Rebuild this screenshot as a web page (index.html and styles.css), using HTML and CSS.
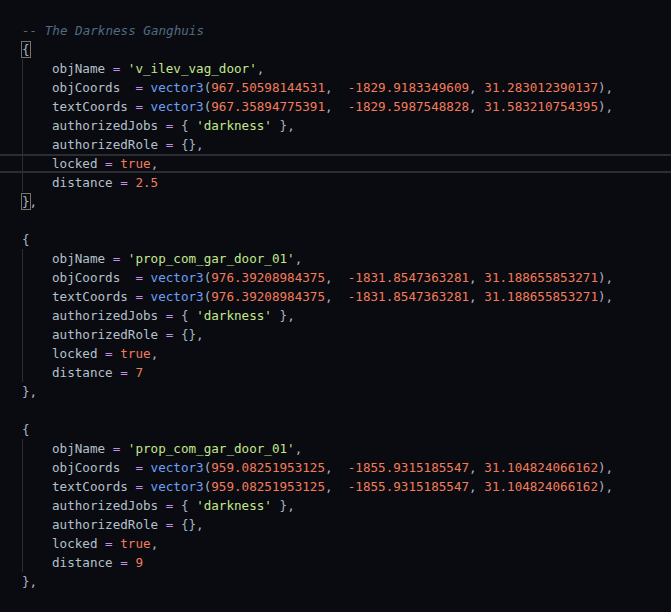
FILE: index.html
```html
<!DOCTYPE html>
<html>
<head>
<meta charset="utf-8">
<link rel="stylesheet" href="styles.css">
</head>
<body>
<div class="editor">
  <div class="line"><span class="c">-- The Darkness Ganghuis</span></div>
  <div class="line"><span class="p match">{</span></div>
  <div class="line"><span class="ind"></span><span class="id">objName</span> <span class="op">=</span> <span class="s">'v_ilev_vag_door'</span><span class="p">,</span></div>
  <div class="line"><span class="ind"></span><span class="id">objCoords</span>  <span class="op">=</span> <span class="fn">vector3</span><span class="p">(</span><span class="n">967.50598144531</span><span class="p">,</span>  <span class="n">-1829.9183349609</span><span class="p">,</span> <span class="n">31.283012390137</span><span class="p">),</span></div>
  <div class="line"><span class="ind"></span><span class="id">textCoords</span> <span class="op">=</span> <span class="fn">vector3</span><span class="p">(</span><span class="n">967.35894775391</span><span class="p">,</span>  <span class="n">-1829.5987548828</span><span class="p">,</span> <span class="n">31.583210754395</span><span class="p">),</span></div>
  <div class="line"><span class="ind"></span><span class="id">authorizedJobs</span> <span class="op">=</span> <span class="p">{</span> <span class="s">'darkness'</span> <span class="p">},</span></div>
  <div class="line"><span class="ind"></span><span class="id">authorizedRole</span> <span class="op">=</span> <span class="p">{},</span></div>
  <div class="line current"><span class="ind"></span><span class="id">locked</span> <span class="op">=</span> <span class="n">true</span><span class="p">,</span></div>
  <div class="line"><span class="ind"></span><span class="id">distance</span> <span class="op">=</span> <span class="n">2.5</span></div>
  <div class="line"><span class="p match">}</span><span class="p">,</span></div>
  <div class="line"></div>
  <div class="line"><span class="p">{</span></div>
  <div class="line"><span class="ind"></span><span class="id">objName</span> <span class="op">=</span> <span class="s">'prop_com_gar_door_01'</span><span class="p">,</span></div>
  <div class="line"><span class="ind"></span><span class="id">objCoords</span>  <span class="op">=</span> <span class="fn">vector3</span><span class="p">(</span><span class="n">976.39208984375</span><span class="p">,</span>  <span class="n">-1831.8547363281</span><span class="p">,</span> <span class="n">31.188655853271</span><span class="p">),</span></div>
  <div class="line"><span class="ind"></span><span class="id">textCoords</span> <span class="op">=</span> <span class="fn">vector3</span><span class="p">(</span><span class="n">976.39208984375</span><span class="p">,</span>  <span class="n">-1831.8547363281</span><span class="p">,</span> <span class="n">31.188655853271</span><span class="p">),</span></div>
  <div class="line"><span class="ind"></span><span class="id">authorizedJobs</span> <span class="op">=</span> <span class="p">{</span> <span class="s">'darkness'</span> <span class="p">},</span></div>
  <div class="line"><span class="ind"></span><span class="id">authorizedRole</span> <span class="op">=</span> <span class="p">{},</span></div>
  <div class="line"><span class="ind"></span><span class="id">locked</span> <span class="op">=</span> <span class="n">true</span><span class="p">,</span></div>
  <div class="line"><span class="ind"></span><span class="id">distance</span> <span class="op">=</span> <span class="n">7</span></div>
  <div class="line"><span class="p">},</span></div>
  <div class="line"></div>
  <div class="line"><span class="p">{</span></div>
  <div class="line"><span class="ind"></span><span class="id">objName</span> <span class="op">=</span> <span class="s">'prop_com_gar_door_01'</span><span class="p">,</span></div>
  <div class="line"><span class="ind"></span><span class="id">objCoords</span>  <span class="op">=</span> <span class="fn">vector3</span><span class="p">(</span><span class="n">959.08251953125</span><span class="p">,</span>  <span class="n">-1855.9315185547</span><span class="p">,</span> <span class="n">31.104824066162</span><span class="p">),</span></div>
  <div class="line"><span class="ind"></span><span class="id">textCoords</span> <span class="op">=</span> <span class="fn">vector3</span><span class="p">(</span><span class="n">959.08251953125</span><span class="p">,</span>  <span class="n">-1855.9315185547</span><span class="p">,</span> <span class="n">31.104824066162</span><span class="p">),</span></div>
  <div class="line"><span class="ind"></span><span class="id">authorizedJobs</span> <span class="op">=</span> <span class="p">{</span> <span class="s">'darkness'</span> <span class="p">},</span></div>
  <div class="line"><span class="ind"></span><span class="id">authorizedRole</span> <span class="op">=</span> <span class="p">{},</span></div>
  <div class="line"><span class="ind"></span><span class="id">locked</span> <span class="op">=</span> <span class="n">true</span><span class="p">,</span></div>
  <div class="line"><span class="ind"></span><span class="id">distance</span> <span class="op">=</span> <span class="n">9</span></div>
  <div class="line"><span class="p">},</span></div>
</div>
</body>
</html>
```

FILE: styles.css
```css
html, body {
  margin: 0;
  padding: 0;
  background: #0a0b10;
}
.editor {
  padding-top: 21px;
  font-family: "DejaVu Sans Mono", "Liberation Mono", monospace;
  font-size: 12.6px;
  color: #b4c0cc;
}
.line {
  height: 19px;
  line-height: 19px;
  padding-left: 22px;
  box-sizing: border-box;
  white-space: pre;
}
.current {
  box-shadow: inset 0 2px 0 #2b2d33, inset 0 -2px 0 #2b2d33;
}
.ind {
  display: inline-block;
  width: 30px;
  height: 19px;
  vertical-align: top;
  box-sizing: border-box;
  border-left: 1px solid #2c2e36;
}
.c { color: #4f6c82; font-style: italic; }
.id { color: #b4c0cc; }
.op { color: #c38fe6; }
.s { color: #c3e88d; }
.fn { color: #6fa0f8; }
.n { color: #f27c5c; }
.p { color: #a8b4c4; }
.match {
  outline: 1px solid #75766a;
  outline-offset: 0;
}
```
